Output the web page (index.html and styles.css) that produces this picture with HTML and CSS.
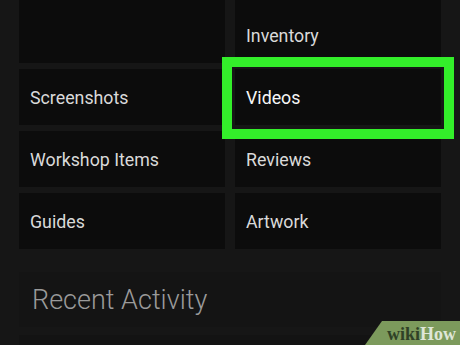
FILE: index.html
```html
<html>
<head>
  <meta charset="utf-8">
  <link rel="stylesheet" href="styles.css">
</head>
<body>
  <div id="screen">
    <div class="menu-grid">
      <div class="tile tile--top"></div>
      <div class="tile tile--top">Inventory</div>
      <div class="tile">Screenshots</div>
      <div class="tile tile--picked">Videos<span class="highlight"></span></div>
      <div class="tile">Workshop Items</div>
      <div class="tile">Reviews</div>
      <div class="tile">Guides</div>
      <div class="tile">Artwork</div>
    </div>

    <section class="panel">
      <h2 class="panel-title">Recent Activity</h2>
    </section>
    <section class="panel panel--next"></section>

    <div class="badge"><span class="badge-wiki">wiki</span><span class="badge-how">How</span></div>
  </div>
</body>
</html>
```

FILE: styles.css
```css
*, *:before, *:after { box-sizing: border-box; }
html, body { margin: 0; padding: 0; background-color: #161616; }
body { font-family: Roboto, "Liberation Sans", sans-serif; }

#screen {
  position: relative;
  width: 460px;
  height: 345px;
  overflow: hidden;
  padding: 0 19px;
}

/* menu tiles */
.menu-grid {
  display: grid;
  grid-template-columns: 1fr 1fr;
  grid-template-rows: 63px repeat(3, 56px);
  column-gap: 10px;
  row-gap: 6px;
}

.tile {
  display: flex;
  align-items: center;
  padding-left: 11px;
  background-color: #0c0c0c;
  color: #dadada;
  font-size: 17.8px;
}
.tile--top { padding-top: 7px; }
.tile--picked { position: relative; color: #f6f6f6; }

.highlight {
  position: absolute;
  top: -12px;
  right: -13px;
  bottom: -14px;
  left: -13px;
  border: 10px solid #33ee2a;
}

/* recent activity */
.panel {
  margin-top: 23px;
  height: 55px;
  background-color: #141414;
  display: flex;
  align-items: center;
}
.panel--next { margin-top: 8px; height: 40px; background-color: #131313; }

.panel-title {
  margin: 0;
  padding-left: 13px;
  font-size: 27px;
  font-weight: 300;
  color: #9a9a9a;
}

/* watermark */
.badge {
  position: absolute;
  right: 0;
  bottom: 0;
  width: 95px;
  height: 24px;
  padding: 2px 4px 0 0;
  background-color: #7c9a5c;
  clip-path: polygon(17px 0, 100% 0, 100% 100%, 0 100%);
  text-align: right;
  font-family: "Liberation Serif", serif;
  font-weight: bold;
  font-size: 18px;
  line-height: 22px;
}
.badge-wiki { color: #2f4126; }
.badge-how { color: #dfe6d8; }
```
